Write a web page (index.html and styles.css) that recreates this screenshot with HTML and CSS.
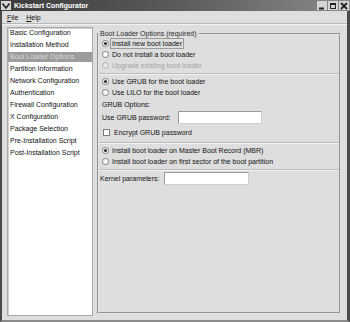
FILE: index.html
```html
<!DOCTYPE html>
<html lang="en">
<head>
    <meta charset="UTF-8">
    <meta name="viewport" content="width=device-width, initial-scale=1.0">
    <title>Kickstart Configurator</title>
    <link rel="stylesheet" href="styles.css">
</head>
<body>
    <div class="window">
        <div class="titlebar">
            <div class="win-menu">
                <svg width="8" height="6" viewBox="0 0 8 6"><path d="M0.5 0.5 L4 5 L7.5 0.5" fill="none" stroke="#222" stroke-width="1.6"/></svg>
            </div>
            <div class="title">Kickstart Configurator</div>
            <div class="win-buttons">
                <div class="win-btn"><svg width="8" height="8" viewBox="0 0 8 8"><rect x="1" y="5.5" width="5" height="2" fill="#222"/></svg></div>
                <div class="win-btn"><svg width="8" height="8" viewBox="0 0 8 8"><rect x="1.5" y="1.5" width="5" height="5" fill="none" stroke="#222" stroke-width="1"/><rect x="1" y="1" width="6" height="2" fill="#222"/></svg></div>
                <div class="win-btn"><svg width="8" height="8" viewBox="0 0 8 8"><path d="M1 1 L7 7 M7 1 L1 7" stroke="#222" stroke-width="1.8"/></svg></div>
            </div>
        </div>

        <div class="menubar">
            <span class="menu-item"><u>F</u>ile</span>
            <span class="menu-item"><u>H</u>elp</span>
        </div>

        <div class="main">
            <ul class="nav">
                <li>Basic Configuration</li>
                <li>Installation Method</li>
                <li class="selected">Boot Loader Options</li>
                <li>Partition Information</li>
                <li>Network Configuration</li>
                <li>Authentication</li>
                <li>Firewall Configuration</li>
                <li>X Configuration</li>
                <li>Package Selection</li>
                <li>Pre-Installation Script</li>
                <li>Post-Installation Script</li>
            </ul>

            <fieldset class="frame">
                <legend>Boot Loader Options (required)</legend>

                <div class="opt"><span class="radio on"></span><span class="label focus">Install new boot loader</span></div>
                <div class="opt"><span class="radio"></span><span class="label">Do not install a boot loader</span></div>
                <div class="opt disabled"><span class="radio"></span><span class="label">Upgrade existing boot loader</span></div>

                <div class="sep sep-1"></div>

                <div class="opt"><span class="radio on"></span><span class="label">Use GRUB for the boot loader</span></div>
                <div class="opt"><span class="radio"></span><span class="label">Use LILO for the boot loader</span></div>

                <div class="plain">GRUB Options:</div>
                <div class="field-row pw-row">
                    <span class="field-label">Use GRUB password:</span>
                    <span class="entry pw-entry"></span>
                </div>
                <div class="opt check-row"><span class="check"></span><span class="label">Encrypt GRUB password</span></div>

                <div class="sep sep-2"></div>

                <div class="opt"><span class="radio on"></span><span class="label">Install boot loader on Master Boot Record (MBR)</span></div>
                <div class="opt"><span class="radio"></span><span class="label">Install boot loader on first sector of the boot partition</span></div>

                <div class="sep sep-3"></div>

                <div class="field-row kernel-row">
                    <span class="field-label">Kernel parameters:</span>
                    <span class="entry kernel-entry"></span>
                </div>
            </fieldset>
        </div>
    </div>
</body>
</html>
```

FILE: styles.css
```css
* {
    box-sizing: border-box;
}

body {
    margin: 0;
    background: #dedede;
    font-family: "Liberation Sans", Arial, sans-serif;
    font-size: 7px;
    color: #111;
}

.window {
    width: 350px;
    height: 322px;
    display: flex;
    flex-direction: column;
    background: #dedede;
    border-left: 2px solid #4a4a4a;
    border-right: 3px solid #4a4a4a;
    border-bottom: 2px solid #8c8c8c;
}

/* Title bar */
.titlebar {
    height: 11px;
    display: flex;
    align-items: center;
    background: linear-gradient(to right, #3b3b3b, #5a5a5a 50%, #8a8a8a);
    margin-left: -2px;
    margin-right: -3px;
    padding: 0 1px;
}

.win-menu {
    width: 10px;
    height: 9px;
    background: #d6d6d6;
    display: flex;
    align-items: center;
    justify-content: center;
}

.title {
    flex: 1;
    margin-left: 3px;
    color: #fff;
    font-weight: bold;
    font-size: 7px;
    line-height: 11px;
}

.win-buttons {
    display: flex;
    gap: 1px;
}

.win-btn {
    width: 10px;
    height: 9px;
    background: #d4d4d4;
    display: flex;
    align-items: center;
    justify-content: center;
}

/* Menu bar */
.menubar {
    height: 13px;
    display: flex;
    align-items: center;
    gap: 8px;
    padding-left: 5px;
    border-bottom: 1px solid #b8b8b8;
    box-shadow: 0 1px 0 #f2f2f2;
}

.menu-item u {
    text-decoration-thickness: 1px;
}

/* Main area */
.main {
    flex: 1;
    display: flex;
    gap: 4px;
    padding: 3px 6px 4px 5px;
    min-height: 0;
}

.nav {
    width: 86px;
    margin: 0;
    padding: 0;
    list-style: none;
    background: #fff;
    border: 1px solid #a8a8a8;
    box-shadow: inset 1px 1px 0 #d0d0d0;
}

.nav li {
    height: 10px;
    line-height: 10px;
    margin-bottom: 2px;
    padding-left: 2px;
    white-space: nowrap;
}

.nav li.selected {
    background: #9c9c9c;
    color: #d9d9d9;
}

/* Frame */
.frame {
    flex: 1;
    min-width: 0;
    margin: 2px 0 2px 0;
    padding: 0;
    border: 2px groove #e6e6e6;
}

.frame legend {
    padding: 0 2px;
    margin-left: -1px;
    line-height: 9px;
    color: #2a2a2a;
}

.opt {
    height: 11px;
    display: flex;
    align-items: center;
    padding-left: 3px;
    white-space: nowrap;
}

.label {
    margin-left: 1px;
    padding: 0 1px;
    line-height: 9px;
    border: 1px solid transparent;
}

.label.focus {
    border-color: #9a9a9a;
}

.radio {
    width: 7px;
    height: 7px;
    border-radius: 50%;
    border: 1px solid #7c7c7c;
    background: #fff;
    position: relative;
}

.radio.on::after {
    content: "";
    position: absolute;
    left: 1px;
    top: 1px;
    width: 3px;
    height: 3px;
    border-radius: 50%;
    background: #222;
}

.disabled {
    color: #a2a2a2;
}

.disabled .radio {
    border-color: #b4b4b4;
    background: #e4e4e4;
}

.check-row {
    padding-left: 4px;
    margin-top: 2px;
}

.check {
    width: 7px;
    height: 7px;
    border: 1px solid #7c7c7c;
    background: #fff;
    margin-right: 1px;
}

.sep {
    height: 2px;
    border-top: 1px solid #bcbcbc;
    border-bottom: 1px solid #f3f3f3;
}

.sep-1 {
    margin: 2px 0 1px;
}

.sep-2 {
    margin: 4px 0 1px;
}

.sep-3 {
    margin: 2px 0 0;
}

.plain {
    height: 11px;
    line-height: 11px;
    padding-left: 3px;
    margin-top: 1px;
}

.field-row {
    height: 15px;
    display: flex;
    align-items: center;
    white-space: nowrap;
}

.pw-row {
    padding-left: 3px;
}

.pw-row .field-label {
    width: 76px;
}

.kernel-row {
    padding-left: 1px;
}

.kernel-row .field-label {
    width: 64px;
}

.entry {
    height: 13px;
    background: #fff;
    border: 1px solid #9a9a9a;
    border-right-color: #cfcfcf;
    border-bottom-color: #cfcfcf;
}

.pw-entry {
    width: 84px;
}

.kernel-entry {
    width: 85px;
}
```
